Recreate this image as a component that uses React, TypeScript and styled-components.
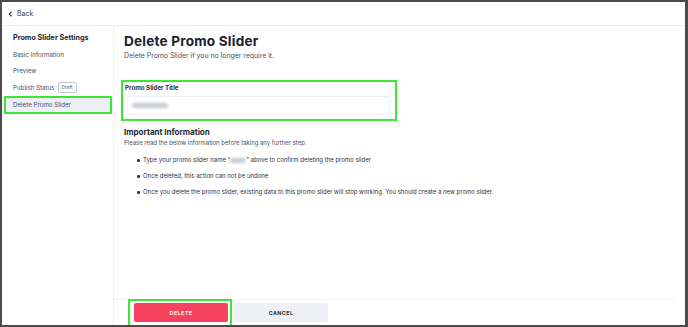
import { createGlobalStyle } from 'styled-components';
import styled from 'styled-components';

const Global = createGlobalStyle`
  html, body { margin: 0; padding: 0; background: #fff; }
  body { font-family: Inter, "Noto Sans", sans-serif; color: #20222e; }
  * { box-sizing: border-box; }
`;

const HIGHLIGHT = '#3de633';

const Frame = styled.div`
  width: 688px;
  height: 327px;
  border: 2px solid #4b4b4b;
  border-right-width: 3px;
  display: flex;
  flex-direction: column;
  background: #fff;
`;

const TopBar = styled.div`
  height: 24px;
  flex: none;
  display: flex;
  align-items: center;
  gap: 4px;
  padding-left: 6px;
  border-bottom: 1px solid #eeeff4;
  font-size: 7px;
  color: #3d4256;
`;

const Body = styled.div`
  flex: 1;
  display: flex;
  min-height: 0;
`;

const Sidebar = styled.nav`
  width: 112px;
  flex: none;
  border-right: 1px solid #f0f1f5;
  padding-top: 3px;
  display: flex;
  flex-direction: column;
`;

const SideHeading = styled.div`
  font-size: 7.2px;
  font-weight: 700;
  line-height: 10px;
  padding: 4px 11px 3px;
  color: #232636;
`;

const SideItem = styled.div<{ $active?: boolean }>`
  position: relative;
  height: 16.5px;
  display: flex;
  align-items: center;
  gap: 3px;
  padding-left: 11px;
  font-size: 6.2px;
  color: #4a4e60;
  background: ${({ $active }) => ($active ? '#eef0f7' : 'transparent')};
  margin-top: ${({ $active }) => ($active ? '1px' : '0')};

  &::after {
    content: '';
    display: ${({ $active }) => ($active ? 'block' : 'none')};
    position: absolute;
    left: 2px;
    right: 1px;
    top: -1px;
    bottom: -1px;
    border: 2px solid ${HIGHLIGHT};
  }
`;

const Badge = styled.span`
  font-size: 4.8px;
  color: #5a5e70;
  border: 1px solid #c4c7d2;
  border-radius: 2px;
  padding: 2px 3px;
  line-height: 1;
`;

const Main = styled.main`
  flex: 1;
  display: flex;
  flex-direction: column;
  min-width: 0;
`;

const Content = styled.div`
  flex: 1;
  padding: 7px 10px 0 10px;
`;

const Title = styled.h1`
  margin: 0;
  font-size: 13.6px;
  font-weight: 700;
  letter-spacing: 0.2px;
  color: #1d2030;
  line-height: 16px;
`;

const Subtitle = styled.p`
  margin: 2px 0 0;
  font-size: 6.9px;
  color: #4b4f60;
  line-height: 10px;
`;

const FieldGroup = styled.div`
  margin: 19px 0 0 -3px;
  width: 276px;
  height: 41px;
  border: 2px solid ${HIGHLIGHT};
  padding: 2px 5px 0 2px;
`;

const Label = styled.div`
  font-size: 6.2px;
  font-weight: 700;
  color: #2a2d3b;
  line-height: 8px;
`;

const Input = styled.div`
  margin-top: 4px;
  margin-left: 2px;
  height: 18px;
  border: 1px solid #eef0f4;
  border-radius: 2px;
  display: flex;
  align-items: center;
  padding-left: 4px;
`;

const Blur = styled.span<{ $w: number }>`
  display: inline-block;
  width: ${({ $w }) => $w}px;
  height: 5px;
  background: #c9cad0;
  border-radius: 3px;
  filter: blur(1.4px);
  vertical-align: middle;
`;

const SectionTitle = styled.h2`
  margin: 5px 0 0;
  font-size: 8px;
  font-weight: 700;
  color: #222534;
  line-height: 12px;
`;

const Note = styled.p`
  margin: 0;
  font-size: 5.95px;
  color: #4b4f60;
  line-height: 10px;
`;

const Bullets = styled.ul`
  margin: 7px 0 0;
  padding: 0 0 0 14px;
  list-style: none;
  display: flex;
  flex-direction: column;
  gap: 6px;
`;

const Bullet = styled.li`
  position: relative;
  padding-left: 5px;
  font-size: 6px;
  line-height: 10px;
  color: #2d3040;

  &::before {
    content: '';
    position: absolute;
    left: -1px;
    top: 4px;
    width: 2.5px;
    height: 2.5px;
    border-radius: 50%;
    background: #2d3040;
  }
`;

const Footer = styled.div`
  flex: none;
  height: 26px;
  margin-right: 10px;
  border-top: 1px solid #f1f2f6;
  display: flex;
  align-items: flex-start;
  padding-left: 14px;
`;

const Highlight = styled.div`
  border: 2px solid ${HIGHLIGHT};
  border-bottom: none;
  padding: 2px 2px 0 4px;
  height: 26px;
  margin-top: -1px;
`;

const Button = styled.button<{ $variant: 'danger' | 'neutral' }>`
  display: block;
  width: 94px;
  height: 19px;
  padding: 0;
  border: none;
  border-radius: 2px;
  font-family: Inter, "Noto Sans", sans-serif;
  font-size: 5.4px;
  font-weight: 700;
  letter-spacing: 0.4px;
  cursor: pointer;
  background: ${({ $variant }) => ($variant === 'danger' ? '#f6425f' : '#eef0f6')};
  color: ${({ $variant }) => ($variant === 'danger' ? '#ffe8ec' : '#2f3242')};
`;

const CancelWrap = styled.div`
  padding-top: 3px;
  margin-left: 2px;
`;

export default function App() {
  return (
    <>
      <Global />
      <Frame>
        <TopBar>
          <svg width="5" height="6" viewBox="0 0 5 6">
            <path d="M3.6 0.6 L1.2 3 L3.6 5.4" fill="none" stroke="#2a2d3b" strokeWidth="1.1" />
          </svg>
          <span>Back</span>
        </TopBar>
        <Body>
          <Sidebar>
            <SideHeading>Promo Slider Settings</SideHeading>
            <SideItem>Basic Information</SideItem>
            <SideItem>Preview</SideItem>
            <SideItem>
              Publish Status <Badge>Draft</Badge>
            </SideItem>
            <SideItem $active>Delete Promo Slider</SideItem>
          </Sidebar>
          <Main>
            <Content>
              <Title>Delete Promo Slider</Title>
              <Subtitle>Delete Promo Slider if you no longer require it.</Subtitle>
              <FieldGroup>
                <Label>Promo Slider Title</Label>
                <Input>
                  <Blur $w={36} />
                </Input>
              </FieldGroup>
              <SectionTitle>Important Information</SectionTitle>
              <Note>Please read the below information before taking any further step.</Note>
              <Bullets>
                <Bullet>
                  Type your promo slider name “<Blur $w={16} />” above to confirm deleting the promo slider
                </Bullet>
                <Bullet>Once deleted, this action can not be undone</Bullet>
                <Bullet>
                  Once you delete the promo slider, existing data to this promo slider will stop working. You
                  should create a new promo slider.
                </Bullet>
              </Bullets>
            </Content>
            <Footer>
              <Highlight>
                <Button $variant="danger">DELETE</Button>
              </Highlight>
              <CancelWrap>
                <Button $variant="neutral">CANCEL</Button>
              </CancelWrap>
            </Footer>
          </Main>
        </Body>
      </Frame>
    </>
  );
}
